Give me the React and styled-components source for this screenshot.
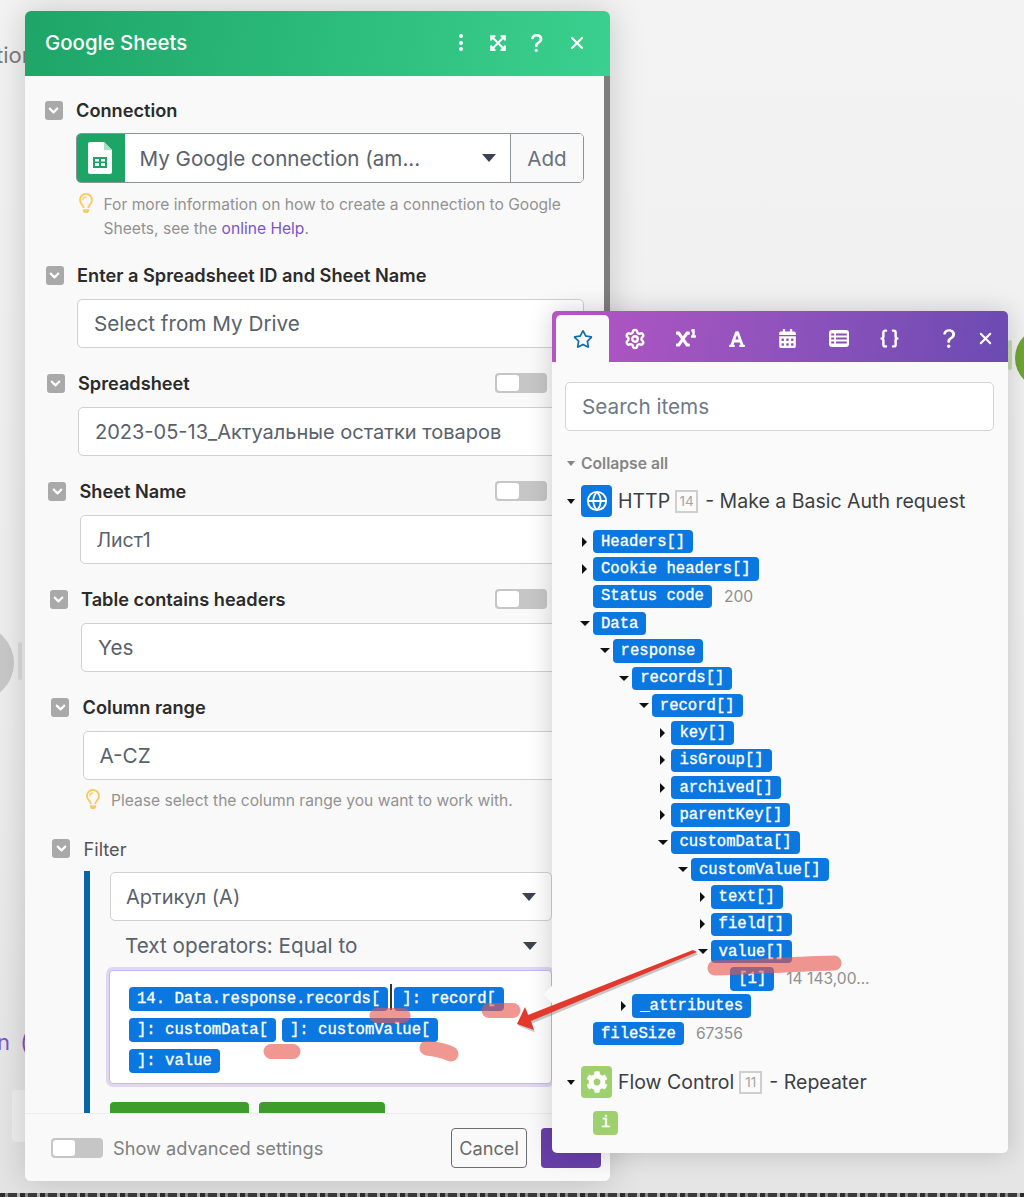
import React from 'react';
import styled, { createGlobalStyle } from 'styled-components';
import {
  FaCalendarAlt,
  FaCog,
  FaExpandArrowsAlt,
  FaFont,
  FaRegLightbulb,
  FaRegStar,
  FaSuperscript,
} from 'react-icons/fa';
import { BsQuestionLg } from 'react-icons/bs';
import { Braces, ChevronDown, Globe, Settings, X } from 'lucide-react';

const GlobalStyle = createGlobalStyle`
  html, body {
    margin: 0;
    padding: 0;
    background: #efefef;
  }
  * {
    box-sizing: border-box;
  }
`;

const Page = styled.div`
  position: relative;
  width: 1024px;
  height: 1197px;
  overflow: hidden;
  background: linear-gradient(180deg, #f3f3f3 0%, #eeeeee 60%, #e4e4e4 100%);
  font-family: Inter, 'Noto Sans', sans-serif;
`;

const BottomStrip = styled.div`
  position: absolute;
  left: 0;
  right: 0;
  bottom: 0;
  height: 4px;
  background: repeating-linear-gradient(90deg, #2c2c2c 0 5px, #8a8a8a 5px 8px, #3c3c3c 8px 17px, #b5b5b5 17px 20px);
`;

const BackText = styled.span`
  position: absolute;
  left: ${({ $x }) => $x}px;
  top: ${({ $y }) => $y}px;
  font-size: 22px;
  line-height: 26px;
  word-spacing: 4px;
  color: ${({ $color }) => $color};
  white-space: nowrap;
`;

const BackCircle = styled.div`
  position: absolute;
  left: ${({ $x }) => $x}px;
  top: ${({ $y }) => $y}px;
  width: ${({ $size }) => $size}px;
  height: ${({ $size }) => $size}px;
  border-radius: 50%;
  background: ${({ $color }) => $color};
`;

const BackMark = styled.div`
  position: absolute;
  left: ${({ $x }) => $x}px;
  top: ${({ $y }) => $y}px;
  width: 4px;
  height: ${({ $h }) => $h}px;
  border-radius: 3px;
  background: ${({ $color }) => $color};
`;

const BackBox = styled.div`
  position: absolute;
  left: 12px;
  top: 1090px;
  width: 30px;
  height: 52px;
  border-radius: 4px;
  background: #f0f0f0;
`;

const Dialog = styled.section`
  position: absolute;
  left: 25px;
  top: 11px;
  width: 585px;
  height: 1170px;
  display: flex;
  flex-direction: column;
  background: #f9f9f9;
  border-radius: 6px;
  overflow: hidden;
  box-shadow: 0 0 34px rgba(0, 0, 0, 0.18);
`;

const DialogHeader = styled.header`
  height: 65px;
  flex: none;
  display: flex;
  align-items: center;
  padding: 0 23px 2px 20px;
  color: #fff;
  background: linear-gradient(100deg, #1ea567 0%, #2dbd7c 55%, #3bd08f 100%);
`;

const DialogTitle = styled.h1`
  margin: 0;
  flex: 1;
  font-size: 20.4px;
  font-weight: 500;
`;

const HeaderActions = styled.div`
  display: flex;
  align-items: center;
  gap: 18px;
  font-size: 18px;
`;

const DotMenu = styled.span`
  display: flex;
  flex-direction: column;
  gap: 2.5px;
  width: 16px;
  margin-right: 2px;
  align-items: center;
  i {
    width: 4px;
    height: 4px;
    border-radius: 50%;
    background: #fff;
  }
`;

const DialogBody = styled.div`
  position: relative;
  flex: 1;
  overflow: hidden;
  padding: 24px 0 0 19.5px;
`;

const Scrollbar = styled.div`
  position: absolute;
  top: 0;
  right: 0;
  width: 6px;
  height: 400px;
  background: #7d7d7d;
`;

const Field = styled.div`
  margin-left: ${({ $shift }) => $shift || 0}px;
  margin-bottom: ${({ $after }) => $after ?? 25}px;
  padding-right: 26px;
`;

const LabelRow = styled.div`
  display: flex;
  align-items: center;
  height: 20px;
  margin-bottom: ${({ $after }) => $after ?? 14}px;
`;

const CheckBox = styled.span`
  flex: none;
  width: 18px;
  height: 19px;
  margin-right: 13.5px;
  display: flex;
  align-items: center;
  justify-content: center;
  border-radius: 3px;
  color: #fff;
  background: #a9a9a9;
`;

const Label = styled.span`
  flex: 1;
  padding: ${({ $plain }) => ($plain ? '2px 0 0' : '0 0 1px')};
  font-size: 18.2px;
  font-weight: ${({ $plain }) => ($plain ? 400 : 600)};
  color: ${({ $plain }) => ($plain ? '#555' : '#2b2b2b')};
`;

const Toggle = styled.span`
  flex: none;
  display: block;
  width: 52px;
  height: 20px;
  margin-right: ${({ $right }) => $right ?? 0}px;
  padding: 2px;
  border-radius: 4px;
  background: #c6c6c6;
  &::before {
    content: '';
    display: block;
    width: 22px;
    height: 16px;
    border-radius: 3px;
    background: #fff;
  }
`;

const ConnectionControl = styled.div`
  display: flex;
  height: 50px;
  margin-left: 31.5px;
  border: 1.5px solid #8c949b;
  border-radius: 5px;
  overflow: hidden;
  background: #fff;
`;

const AppIcon = styled.span`
  flex: none;
  width: 49px;
  margin: -1.5px 0 -1.5px -1.5px;
  display: flex;
  align-items: center;
  justify-content: center;
  background: #1ca564;
`;

const ConnectionValue = styled.span`
  flex: 1;
  display: flex;
  align-items: center;
  padding: 0 14px 0 15px;
  font-size: 20.6px;
  color: #58626c;
  white-space: nowrap;
`;

const Caret = styled.i`
  flex: none;
  margin-left: auto;
  width: 0;
  height: 0;
  border-left: 7.5px solid transparent;
  border-right: 7.5px solid transparent;
  border-top: 8px solid #3a4450;
`;

const AddButton = styled.span`
  flex: none;
  width: 73px;
  display: flex;
  align-items: center;
  justify-content: center;
  border-left: 1.5px solid #8c949b;
  background: #f9f9f9;
  font-size: 20.6px;
  color: #6a737b;
`;

const Hint = styled.div`
  display: flex;
  margin: ${({ $top }) => $top ?? 10}px 0 0 ${({ $left }) => $left ?? 31}px;
  font-size: 15.6px;
  line-height: 24px;
  color: #929292;
  white-space: nowrap;
  svg {
    flex: none;
    margin-right: 8px;
    color: #fbc964;
    font-size: 20px;
  }
`;

const HelpLink = styled.a`
  color: #7a55cb;
`;

const TextInput = styled.div`
  display: flex;
  align-items: center;
  height: 49px;
  margin-left: ${({ $left }) => $left ?? 31.5}px;
  padding: 0 16px;
  border: 1.5px solid #d0d0d0;
  border-radius: 5px;
  background: #fff;
  font-size: ${({ $size }) => $size ?? 20.7}px;
  color: #58626c;
  white-space: nowrap;
`;

const FilterBlock = styled.div`
  margin: -1px 0 0 32px;
  padding: 1px 0 0 20px;
  border-left: 6px solid #0a65a5;
  width: 468px;
  height: 260px;
`;

const FilterSelect = styled(TextInput)`
  width: 442px;
  margin-left: 0;
  padding: 0 15px;
`;

const OperatorRow = styled.div`
  display: flex;
  align-items: center;
  width: 442px;
  height: 49px;
  padding: 0 15px;
  font-size: 20.7px;
  color: #58626c;
`;

const ValueEditor = styled.div`
  position: relative;
  width: 443px;
  height: 114px;
  margin-left: -1px;
  padding: 16px 0 0 19px;
  border: 1.5px solid #c9b9e8;
  border-radius: 4px;
  background: #fff;
  box-shadow: 0 0 0 3px #dfd6f0;
`;

const EditorLine = styled.div`
  display: flex;
  height: 31px;
  gap: 6px;
`;

const Pill = styled.span`
  display: inline-flex;
  align-items: center;
  flex: none;
  height: 23.5px;
  padding: 0 8px;
  border-radius: 4px;
  background: ${({ $green }) => ($green ? '#9ed06e' : '#0a78e0')};
  color: #fff;
  font-family: 'Liberation Mono', monospace;
  font-size: 15.6px;
  font-weight: 400;
  -webkit-text-stroke: 0.35px #fff;
  white-space: pre;
`;

const TextCursor = styled.i`
  position: absolute;
  left: 280px;
  top: 13px;
  width: 1.5px;
  height: 26px;
  background: #333;
`;

const ButtonRow = styled.div`
  display: flex;
  gap: 10px;
  margin-top: 18px;
`;

const GreenButton = styled.span`
  display: block;
  width: ${({ $w }) => $w}px;
  height: 40px;
  border-radius: 4px;
  background: #3d9c2c;
`;

const DialogFooter = styled.footer`
  height: 68px;
  flex: none;
  display: flex;
  align-items: center;
  padding: 0 0 0 26px;
  border-top: 1px solid #ececec;
  background: #f9f9f9;
`;

const FooterText = styled.span`
  margin-left: 10px;
  flex: 1;
  font-size: 18.2px;
  color: #808080;
`;

const CancelButton = styled.span`
  width: 76px;
  height: 40px;
  display: flex;
  align-items: center;
  justify-content: center;
  border: 1.5px solid #6e6e6e;
  border-radius: 4px;
  font-size: 18.2px;
  color: #6a6a6a;
`;

const OkButton = styled.span`
  display: block;
  width: 60px;
  height: 40px;
  margin-left: 14px;
  margin-right: 9px;
  border-radius: 4px;
  background: #683fa8;
`;

const Picker = styled.section`
  position: absolute;
  left: 552px;
  top: 311px;
  width: 456px;
  height: 842px;
  background: #fafafa;
  border-radius: 5px;
  box-shadow: 0 0 26px rgba(0, 0, 0, 0.18);
  &::before {
    content: '';
    position: absolute;
    left: -6px;
    top: 677px;
    width: 13px;
    height: 13px;
    transform: rotate(45deg);
    background: #fafafa;
  }
`;

const PickerTabs = styled.div`
  position: relative;
  display: flex;
  align-items: flex-end;
  height: 51px;
  padding-left: 4px;
  border-radius: 5px 5px 0 0;
  color: #fff;
  background: linear-gradient(100deg, #b655c3 0%, #9353bd 45%, #6b4bb2 100%);
`;

const Tab = styled.span`
  flex: none;
  width: ${({ $active }) => ($active ? 53 : 51)}px;
  height: 47px;
  display: flex;
  align-items: center;
  justify-content: center;
  border-radius: 5px 5px 0 0;
  font-size: ${({ $size }) => $size ?? 18}px;
  color: ${({ $active }) => ($active ? '#0f6ab4' : '#fff')};
  background: ${({ $active }) => ($active ? '#fafafa' : 'transparent')};
`;

const TabSpacer = styled.span`
  flex: 1;
`;

const PickerAction = styled(Tab)`
  width: 36px;
  &:last-child {
    margin-right: 5px;
  }
`;

const SearchBox = styled.div`
  display: flex;
  align-items: center;
  height: 49px;
  margin: 20px 14px 0 13px;
  padding: 0 16px;
  border: 1.5px solid #d4d4d4;
  border-radius: 5px;
  background: #fff;
  font-size: 20.7px;
  color: #6e7a86;
`;

const CollapseRow = styled.div`
  display: flex;
  align-items: center;
  height: 20px;
  margin: 22px 0 0 15px;
  font-size: 15.7px;
  font-weight: 600;
  color: #858585;
`;

const SmallCaret = styled.i`
  flex: none;
  width: 0;
  height: 0;
  margin-right: 6px;
  border-left: 4.5px solid transparent;
  border-right: 4.5px solid transparent;
  border-top: 5.5px solid ${({ $color }) => $color ?? '#111'};
`;

const ModuleRow = styled.div`
  display: flex;
  align-items: center;
  height: 32px;
  margin: ${({ $top }) => $top}px 0 0 15px;
  font-size: 19.5px;
  color: #3a3f46;
  white-space: pre;
`;

const ModuleIcon = styled.span`
  flex: none;
  width: 31px;
  height: 32px;
  margin-right: 6px;
  display: flex;
  align-items: center;
  justify-content: center;
  border-radius: 4px;
  color: #fff;
  background: ${({ $color }) => $color};
`;

const ModuleBadge = styled.span`
  flex: none;
  width: 23px;
  height: 23px;
  margin: 0 7px 0 5px;
  display: flex;
  align-items: center;
  justify-content: center;
  border: 2px solid #cfcfcf;
  font-size: 13.5px;
  color: #a5a5a5;
`;

const Tree = styled.ul`
  list-style: none;
  margin: 11px 0 0 27px;
  padding: 0;
`;

const TreeRow = styled.li`
  display: flex;
  align-items: center;
  height: 27.33px;
  margin-left: ${({ $level }) => $level * 19.6}px;
`;

const TreeArrow = styled.span`
  flex: none;
  width: 14px;
  display: flex;
  justify-content: center;
  i {
    display: block;
    width: 0;
    height: 0;
  }
  i.down {
    margin-right: 2px;
    border-left: 5px solid transparent;
    border-right: 5px solid transparent;
    border-top: 5.5px solid #111;
  }
  i.right {
    margin-right: 3px;
    border-top: 5px solid transparent;
    border-bottom: 5px solid transparent;
    border-left: 5.5px solid #111;
  }
`;

const TreeValue = styled.span`
  margin-left: 12px;
  font-size: 15.6px;
  color: #8f8f8f;
  white-space: nowrap;
`;

const InfoPill = styled(Pill)`
  margin: 13px 0 0 41px;
`;

const Annotations = styled.svg`
  position: absolute;
  left: 0;
  top: 0;
  pointer-events: none;
`;

const treeItems = [
  { level: 0, label: 'Headers[]', arrow: 'right' },
  { level: 0, label: 'Cookie headers[]', arrow: 'right' },
  { level: 0, label: 'Status code', value: '200' },
  { level: 0, label: 'Data', arrow: 'down' },
  { level: 1, label: 'response', arrow: 'down' },
  { level: 2, label: 'records[]', arrow: 'down' },
  { level: 3, label: 'record[]', arrow: 'down' },
  { level: 4, label: 'key[]', arrow: 'right' },
  { level: 4, label: 'isGroup[]', arrow: 'right' },
  { level: 4, label: 'archived[]', arrow: 'right' },
  { level: 4, label: 'parentKey[]', arrow: 'right' },
  { level: 4, label: 'customData[]', arrow: 'down' },
  { level: 5, label: 'customValue[]', arrow: 'down' },
  { level: 6, label: 'text[]', arrow: 'right' },
  { level: 6, label: 'field[]', arrow: 'right' },
  { level: 6, label: 'value[]', arrow: 'down' },
  { level: 7, label: '[1]', value: '14 143,00...' },
  { level: 2, label: '_attributes', arrow: 'right' },
  { level: 0, label: 'fileSize', value: '67356' },
];

const Check = () => (
  <CheckBox>
    <ChevronDown size={15} strokeWidth={3.4} />
  </CheckBox>
);

const SheetsIcon = () => (
  <svg width="24" height="32" viewBox="0 0 24 32">
    <path d="M2 0h14l8 8v22a2 2 0 0 1-2 2H2a2 2 0 0 1-2-2V2a2 2 0 0 1 2-2z" fill="#fff" />
    <path d="M16 0l8 8h-8z" fill="#a8e0c4" />
    <path d="M5 15h14v11H5z M7 17v2.5h4V17z M13 17v2.5h4V17z M7 21v3h4v-3z M13 21v3h4v-3z" fill="#1ca564" fillRule="evenodd" />
  </svg>
);

const TableIcon = () => (
  <svg width="20" height="17" viewBox="0 0 20 17">
    <path
      d="M3 0h14a3 3 0 0 1 3 3v11a3 3 0 0 1-3 3H3a3 3 0 0 1-3-3V3a3 3 0 0 1 3-3z M2.2 3.4v2h3v-2z M7 3.4v2h10.8v-2z M2.2 7.5v2h3v-2z M7 7.5v2h10.8v-2z M2.2 11.6v2h3v-2z M7 11.6v2h10.8v-2z"
      fill="#fff"
      fillRule="evenodd"
    />
  </svg>
);

const SimpleField = ({ shift, label, value, size, toggle }) => (
  <Field $shift={shift}>
    <LabelRow>
      <Check />
      <Label>{label}</Label>
      {toggle && <Toggle $right={37} />}
    </LabelRow>
    <TextInput $size={size}>{value}</TextInput>
  </Field>
);

export default function App() {
  return (
    <Page>
      <GlobalStyle />
      <BackText $x={-4} $y={42} $color="#7c7c7c">tion</BackText>
      <BackCircle $x={-62} $y={625} $size={76} $color="#c9c9c9" />
      <BackMark $x={18} $y={642} $h={38} $color="#dcdcdc" />
      <BackText $x={-3} $y={1029} $color="#7a55cb">n (</BackText>
      <BackBox />
      <BackCircle $x={1015} $y={327} $size={62} $color="#6da533" />
      <BackMark $x={1008} $y={340} $h={30} $color="#c5dcae" />
      <BottomStrip />

      <Dialog>
        <DialogHeader>
          <DialogTitle>Google Sheets</DialogTitle>
          <HeaderActions>
            <DotMenu><i /><i /><i /></DotMenu>
            <FaExpandArrowsAlt />
            <BsQuestionLg size={24} />
            <X size={20} strokeWidth={2.6} />
          </HeaderActions>
        </DialogHeader>

        <DialogBody>
          <Scrollbar />

          <Field $after={24}>
            <LabelRow $after={13}>
              <Check />
              <Label>Connection</Label>
            </LabelRow>
            <ConnectionControl>
              <AppIcon><SheetsIcon /></AppIcon>
              <ConnectionValue>
                My Google connection (am...
                <Caret />
              </ConnectionValue>
              <AddButton>Add</AddButton>
            </ConnectionControl>
            <Hint>
              <FaRegLightbulb />
              <span>
                For more information on how to create a connection to Google
                <br />
                Sheets, see the <HelpLink>online Help</HelpLink>.
              </span>
            </Hint>
          </Field>

          <SimpleField shift={1} label="Enter a Spreadsheet ID and Sheet Name" value="Select from My Drive" />
          <SimpleField shift={2} label="Spreadsheet" value="2023-05-13_Актуальные остатки товаров" size={20} toggle />
          <SimpleField shift={3.5} label="Sheet Name" value="Лист1" size={19.5} toggle />
          <SimpleField shift={5} label="Table contains headers" value="Yes" toggle />

          <Field $shift={6.5} $after={25}>
            <LabelRow>
              <Check />
              <Label>Column range</Label>
            </LabelRow>
            <TextInput>A-CZ</TextInput>
            <Hint $left={32} $top={9}>
              <FaRegLightbulb />
              <span>Please select the column range you want to work with.</span>
            </Hint>
          </Field>

          <Field $shift={7.5} $after={0}>
            <LabelRow>
              <Check />
              <Label $plain>Filter</Label>
            </LabelRow>
            <FilterBlock>
              <FilterSelect $size={20}>
                Артикул (A)
                <Caret />
              </FilterSelect>
              <OperatorRow>
                Text operators: Equal to
                <Caret />
              </OperatorRow>
              <ValueEditor>
                <EditorLine>
                  <Pill>14. Data.response.records[</Pill>
                  <Pill>]: record[</Pill>
                </EditorLine>
                <EditorLine>
                  <Pill>]: customData[</Pill>
                  <Pill>]: customValue[</Pill>
                </EditorLine>
                <EditorLine>
                  <Pill>]: value</Pill>
                </EditorLine>
                <TextCursor />
              </ValueEditor>
              <ButtonRow>
                <GreenButton $w={139} />
                <GreenButton $w={126} />
              </ButtonRow>
            </FilterBlock>
          </Field>
        </DialogBody>

        <DialogFooter>
          <Toggle />
          <FooterText>Show advanced settings</FooterText>
          <CancelButton>Cancel</CancelButton>
          <OkButton />
        </DialogFooter>
      </Dialog>

      <Picker>
        <PickerTabs>
          <Tab $active $size={20}><FaRegStar /></Tab>
          <Tab><Settings size={22} strokeWidth={2.6} /></Tab>
          <Tab $size={20}><FaSuperscript /></Tab>
          <Tab $size={18}><FaFont /></Tab>
          <Tab $size={19}><FaCalendarAlt /></Tab>
          <Tab><TableIcon /></Tab>
          <Tab><Braces size={21} strokeWidth={2.8} /></Tab>
          <TabSpacer />
          <PickerAction $size={25}><BsQuestionLg /></PickerAction>
          <PickerAction><X size={19} strokeWidth={2.6} /></PickerAction>
        </PickerTabs>

        <SearchBox>Search items</SearchBox>

        <CollapseRow>
          <SmallCaret $color="#858585" />
          Collapse all
        </CollapseRow>

        <ModuleRow $top={12}>
          <SmallCaret />
          <ModuleIcon $color="#0a78e0"><Globe size={22} strokeWidth={2} /></ModuleIcon>
          HTTP
          <ModuleBadge>14</ModuleBadge>
          - Make a Basic Auth request
        </ModuleRow>

        <Tree>
          {treeItems.map((item) => (
            <TreeRow key={item.label} $level={item.level}>
              <TreeArrow>{item.arrow && <i className={item.arrow} />}</TreeArrow>
              <Pill>{item.label}</Pill>
              {item.value && <TreeValue>{item.value}</TreeValue>}
            </TreeRow>
          ))}
        </Tree>

        <ModuleRow $top={19}>
          <SmallCaret />
          <ModuleIcon $color="#9ed06e"><FaCog size={22} /></ModuleIcon>
          Flow Control
          <ModuleBadge>11</ModuleBadge>
          - Repeater
        </ModuleRow>

        <InfoPill $green>i</InfoPill>
      </Picker>

      <Annotations width="1024" height="1197" viewBox="0 0 1024 1197">
        <g fill="none" stroke="#e8574e" strokeOpacity="0.62" strokeLinecap="round" strokeWidth="15">
          <path d="M377 1015.5h26" />
          <path d="M489 1010.5h24" />
          <path d="M271 1051.5h22" />
          <path d="M427 1048c8 1 16 2 24 6" />
          <path d="M715 968c40-1 80-4 119-5" />
        </g>
        <path d="M697 953L531 1022l3 9-17-7 8-17 3 8L694 951z" fill="#777" opacity="0.4" transform="translate(1 1.5)" />
        <path d="M697 952L531 1021l3 9-17-6 8-17 3 8L693 950z" fill="#e2392c" />
      </Annotations>
    </Page>
  );
}
